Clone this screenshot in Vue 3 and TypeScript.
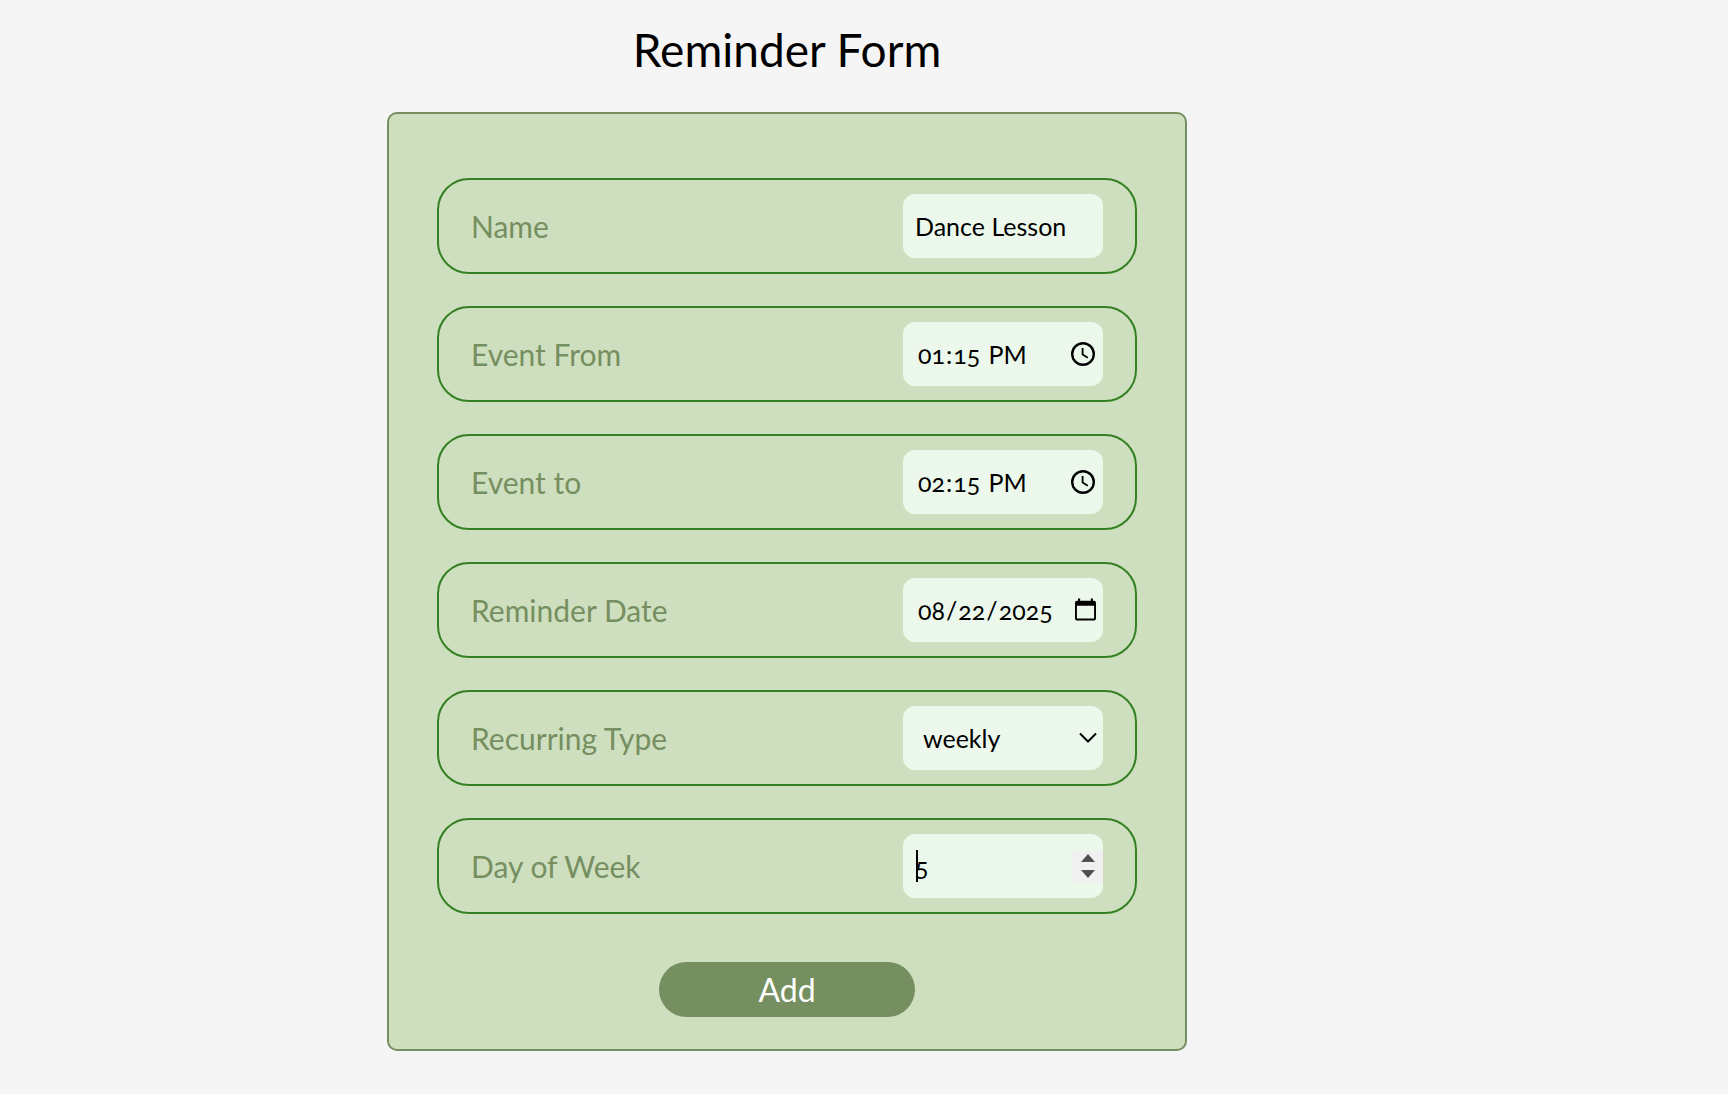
<script setup lang="ts">
import { ref } from 'vue'

const name = ref('Dance Lesson')
const eventFrom = ref('13:15')
const eventTo = ref('14:15')
const reminderDate = ref('2025-08-22')
const recurringType = ref('weekly')
const dayOfWeek = ref(5)
</script>

<template>
  <main class="page">
    <h1 class="title">Reminder Form</h1>
    <form class="card" @submit.prevent>
      <div class="field">
        <label for="name">Name</label>
        <div class="control">
          <input id="name" v-model="name" type="text" />
        </div>
      </div>

      <div class="field">
        <label for="from">Event From</label>
        <div class="control">
          <input id="from" v-model="eventFrom" class="temporal" type="time" />
          <svg class="icon clock" viewBox="0 0 24 24" aria-hidden="true">
            <circle cx="12" cy="12" r="10.8" stroke-width="2.4" />
            <path d="M11.6 6v6.600l5.200 3.200" stroke-width="1.8" />
          </svg>
        </div>
      </div>

      <div class="field">
        <label for="to">Event to</label>
        <div class="control">
          <input id="to" v-model="eventTo" class="temporal" type="time" />
          <svg class="icon clock" viewBox="0 0 24 24" aria-hidden="true">
            <circle cx="12" cy="12" r="10.8" stroke-width="2.4" />
            <path d="M11.6 6v6.600l5.200 3.200" stroke-width="1.8" />
          </svg>
        </div>
      </div>

      <div class="field">
        <label for="date">Reminder Date</label>
        <div class="control">
          <input id="date" v-model="reminderDate" class="temporal" type="date" />
          <svg class="icon calendar" viewBox="0 0 22 24" aria-hidden="true">
            <path fill-rule="evenodd" d="M3.2 0h2.2v2.3h11.2V0h2.2v2.3H20a2 2 0 0 1 2 2V21a2 2 0 0 1-2 2H2a2 2 0 0 1-2-2V4.3a2 2 0 0 1 2-2h1.2zM2 7.5V21h18V7.5z" />
          </svg>
        </div>
      </div>

      <div class="field">
        <label for="type">Recurring Type</label>
        <div class="control">
          <select id="type" v-model="recurringType">
            <option>daily</option>
            <option>weekly</option>
            <option>monthly</option>
          </select>
          <svg class="icon chevron" viewBox="0 0 18 12" aria-hidden="true">
            <path d="M1 1.5l8 8 8-8" />
          </svg>
        </div>
      </div>

      <div class="field">
        <label for="day">Day of Week</label>
        <div class="control">
          <input id="day" v-model="dayOfWeek" class="number" type="number" min="1" max="7" />
          <span class="caret" aria-hidden="true"></span>
          <svg class="icon spinner" viewBox="0 0 30 32" aria-hidden="true">
            <rect width="30" height="32" fill="#f0f0f0" />
            <path d="M8 12l7-8 7 8zM8 20h14l-7 8z" fill="#505050" />
          </svg>
        </div>
      </div>

      <button class="add" type="submit">Add</button>
    </form>
  </main>
</template>

<style>
body {
  background: #f5f5f5;
}
</style>

<style scoped>
.page {
  box-sizing: border-box;
  display: flex;
  flex-direction: column;
  align-items: center;
  padding: 20px 154px 42px 0;
  font-family: Lato, "Open Sans", sans-serif;
  font-variant-numeric: oldstyle-nums;
}

.title {
  margin: 0 0 32px;
  font-size: 46px;
  font-weight: 400;
  line-height: 60px;
  color: #000;
}

.card {
  box-sizing: border-box;
  display: flex;
  flex-direction: column;
  gap: 32px;
  width: 100%;
  max-width: 800px;
  padding: 64px 48px 32px;
  border: 2px solid #768f60;
  border-radius: 10px;
  background: #cedfbf;
}

.field {
  display: flex;
  align-items: center;
  justify-content: space-between;
  padding: 14px 32px;
  border: 2px solid #348022;
  border-radius: 32px;
}

.field label {
  font-size: 30px;
  line-height: 40px;
  color: #768f60;
}

.control {
  position: relative;
  width: 200px;
  height: 64px;
}

.control input,
.control select {
  box-sizing: border-box;
  width: 100%;
  height: 100%;
  margin: 0;
  padding: 0 12px;
  border: 0;
  border-radius: 12px;
  outline: 0;
  appearance: none;
  background: #ecf8eb;
  color: #000;
  font: inherit;
  font-size: 25px;
  font-variant-numeric: oldstyle-nums;
}

.control select {
  padding: 0 20px;
}

.control .temporal {
  padding: 0 4px 0 14px;
}

.temporal::-webkit-calendar-picker-indicator {
  width: 24px;
  height: 24px;
  margin: 0;
  padding: 0;
  opacity: 0;
}

.number::-webkit-inner-spin-button {
  opacity: 0;
}

.icon {
  position: absolute;
  top: 0;
  bottom: 0;
  margin: auto 0;
  pointer-events: none;
}

.clock {
  right: 8px;
  width: 24px;
  height: 24px;
  fill: none;
  stroke: #000;
}

.calendar {
  right: 7px;
  width: 21px;
  height: 24px;
}

.chevron {
  right: 6px;
  width: 18px;
  height: 12px;
  fill: none;
  stroke: #000;
  stroke-width: 2;
}

.spinner {
  right: 0;
  width: 30px;
  height: 32px;
}

.caret {
  position: absolute;
  top: 16px;
  left: 13px;
  width: 2px;
  height: 32px;
  background: #000;
}

.add {
  align-self: center;
  width: 256px;
  height: 55px;
  margin-top: 16px;
  padding: 0;
  border: 0;
  border-radius: 28px;
  background: #768f60;
  color: #fff;
  font: inherit;
  font-size: 32px;
}
</style>
